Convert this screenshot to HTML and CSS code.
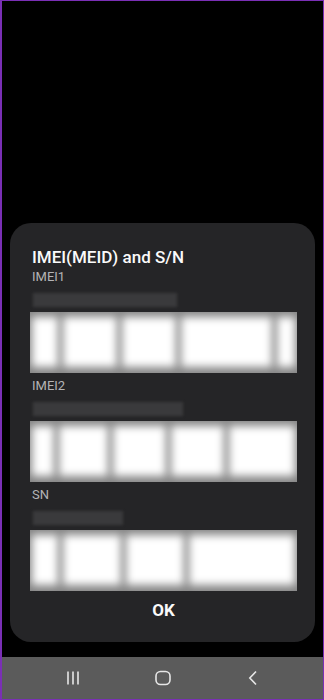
FILE: index.html
```html
<!DOCTYPE html>
<html>
<head>
<meta charset="utf-8">
<link rel="stylesheet" href="styles.css">
</head>
<body>
<div class="screen">
  <div class="spacer"></div>
  <div class="dialog">
    <div class="title">IMEI(MEID) and S/N</div>
    <div class="label">IMEI1</div>
    <div class="bar bar-1"></div>
    <div class="blk blk-1"><span></span><span></span><span></span><span></span><span></span></div>
    <div class="label">IMEI2</div>
    <div class="bar bar-2"></div>
    <div class="blk blk-2"><span></span><span></span><span></span><span></span><span></span></div>
    <div class="label">SN</div>
    <div class="bar bar-3"></div>
    <div class="blk blk-3"><span></span><span></span><span></span><span></span></div>
    <div class="ok">OK</div>
  </div>
  <div class="nav">
    <div class="nav-btn">
      <svg width="14" height="16" viewBox="0 0 14 16"><path d="M2 1.5v13M7 1.5v13M12 1.5v13" stroke="#e6e6e6" stroke-width="1.6" fill="none"/></svg>
    </div>
    <div class="nav-btn">
      <svg width="16" height="16" viewBox="0 0 16 16"><rect x="1" y="1.5" width="14" height="13" rx="4.5" stroke="#e6e6e6" stroke-width="1.6" fill="none"/></svg>
    </div>
    <div class="nav-btn">
      <svg width="10" height="16" viewBox="0 0 10 16"><path d="M8 1.5L1.8 8l6.2 6.5" stroke="#e6e6e6" stroke-width="1.6" fill="none"/></svg>
    </div>
  </div>
</div>
</body>
</html>
```
FILE: styles.css
```css
* { box-sizing: border-box; }
html, body { margin: 0; padding: 0; background: #000; }
body { font-family: Roboto, "Noto Sans", sans-serif; }
.screen {
  width: 324px;
  height: 700px;
  border: 1px solid #7a2fb5;
  border-left-width: 2px;
  display: flex;
  flex-direction: column;
  background: #000;
  overflow: hidden;
}
.spacer { flex: 1; }
.dialog {
  margin: 0 8px 15px 8px;
  background: #252527;
  border-radius: 21px;
  padding: 24px 18px 22px 20px;
  display: flex;
  flex-direction: column;
}
.title {
  padding-left: 2px;
  color: #fafafa;
  font-size: 17px;
  line-height: 20px;
  font-weight: 500;
}
.label {
  padding-left: 2px;
  margin-top: 5px;
  color: #b4b4b6;
  font-size: 13px;
  line-height: 16px;
}
.title + .label { margin-top: 2px; }
.bar {
  margin: 8px 0 0 3px;
  height: 14px;
  background: #3a3a3c;
  filter: blur(1.5px);
}
.bar-1 { width: 144px; }
.bar-2 { width: 150px; }
.bar-3 { width: 90px; }
.blk {
  margin-top: 5px;
  height: 61px;
  background: #858585;
  padding: 5px 2px 6px 2px;
  display: grid;
  column-gap: 5px;
  overflow: hidden;
}
.blk span {
  background: #fff;
  filter: blur(4px);
}
.blk-1 { grid-template-columns: 24fr 50fr 51fr 84fr 17fr; }
.blk-2 { grid-template-columns: 22fr 48fr 52fr 52fr 65fr; }
.blk-3 { grid-template-columns: 25fr 56fr 56fr 103fr; }
.ok {
  margin-top: 9px;
  text-align: center;
  color: #fafafa;
  font-size: 17px;
  line-height: 20px;
  font-weight: 700;
}
.nav {
  height: 42px;
  background: #5b5b5b;
  display: flex;
  justify-content: center;
  align-items: center;
  gap: 60px;
}
.nav-btn {
  width: 30px;
  display: flex;
  justify-content: center;
  align-items: center;
}
.nav-btn svg { display: block; }
```
